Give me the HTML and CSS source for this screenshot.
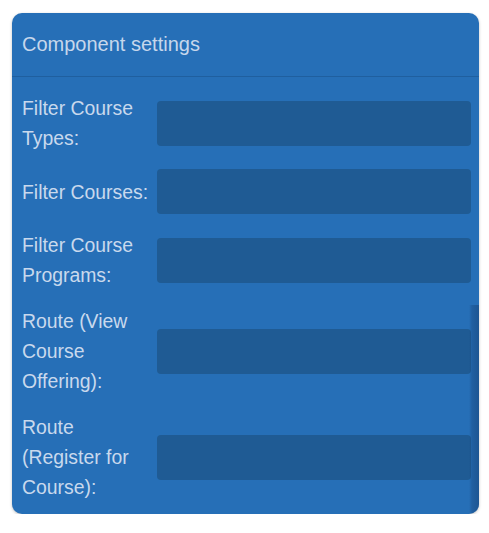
FILE: index.html
```html
<!DOCTYPE html>
<html>
<head>
<meta charset="utf-8">
<link rel="stylesheet" href="styles.css">
</head>
<body>
<div class="panel">
  <div class="header">Component settings</div>
  <div class="body">
    <div class="row r1">
      <div class="label">Filter Course Types:</div>
      <div class="input"></div>
    </div>
    <div class="row r2">
      <div class="label">Filter Courses:</div>
      <div class="input"></div>
    </div>
    <div class="row r3">
      <div class="label">Filter Course Programs:</div>
      <div class="input"></div>
    </div>
    <div class="row r4">
      <div class="label">Route (View Course Offering):</div>
      <div class="input"></div>
    </div>
    <div class="row r5">
      <div class="label">Route (Register for Course):</div>
      <div class="input"></div>
    </div>
  </div>
  <div class="scrollbar"></div>
</div>
</body>
</html>
```
FILE: styles.css
```css
html, body {
  margin: 0;
  padding: 0;
  background: #ffffff;
}
body {
  padding: 13px 10px 0 12px;
  font-family: "Liberation Sans", Arial, sans-serif;
}
.panel {
  position: relative;
  width: 467px;
  height: 501px;
  background: #266fb7;
  border-radius: 10px;
  box-shadow: 0 1px 3px rgba(0,0,0,0.25);
  overflow: hidden;
}
.header {
  height: 64px;
  box-sizing: border-box;
  padding-left: 10px;
  display: flex;
  align-items: center;
  font-size: 20px;
  color: #c6d7ec;
  border-bottom: 1px solid #1f5f9f;
}
.body {
  display: flex;
  flex-direction: column;
  gap: 16px;
  padding: 16px 8px 0 10px;
}
.row {
  display: flex;
  align-items: center;
  gap: 1px;
}
.label {
  width: 134px;
  flex: none;
  font-size: 19.4px;
  line-height: 30px;
  color: #c9d9ed;
}
.input {
  flex: 1;
  height: 45px;
  background: #1f5b94;
  border-radius: 4px;
}
.scrollbar {
  position: absolute;
  right: 0;
  top: 292px;
  bottom: 0;
  width: 10px;
  background: linear-gradient(to right, rgba(20,60,110,0), rgba(20,60,110,0.3) 30%, rgba(20,60,110,0.5));
}
```
